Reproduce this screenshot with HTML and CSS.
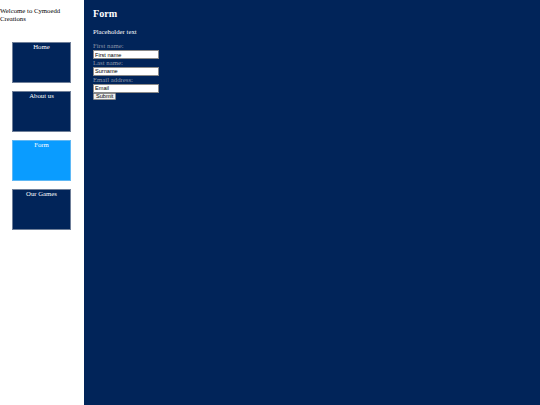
FILE: index.html
```html
<!DOCTYPE html>
<html lang="en">
<head>
<meta charset="utf-8">
<title>Form - Cymoedd Creations</title>
<link rel="stylesheet" href="styles.css">
</head>
<body>
<aside class="sidebar">
  <p class="welcome">Welcome to Cymoedd Creations</p>
  <nav class="nav">
    <a class="nav-item" href="#">Home</a>
    <a class="nav-item" href="#">About us</a>
    <a class="nav-item nav-item-active" href="#">Form</a>
    <a class="nav-item" href="#">Our Games</a>
  </nav>
</aside>
<main class="main">
  <h2 class="title">Form</h2>
  <p class="intro">Placeholder text</p>
  <form class="form">
    <label class="label" for="fname">First name:</label>
    <input class="field" type="text" id="fname" value="First name">
    <label class="label" for="lname">Last name:</label>
    <input class="field" type="text" id="lname" value="Surname">
    <label class="label" for="email">Email address:</label>
    <input class="field" type="text" id="email" value="Email">
    <button class="submit" type="button">Submit</button>
  </form>
</main>
</body>
</html>
```
FILE: styles.css
```css
html, body {
  margin: 0;
  height: 100%;
}

body {
  display: flex;
  font-family: "Liberation Serif", "Times New Roman", serif;
  font-size: 6.75px;
  line-height: 7.8px;
  background: #ffffff;
  color: #000000;
}

.sidebar {
  width: 84.4px;
  flex: none;
  background: #ffffff;
}

.welcome {
  margin: 6.75px 0;
}

.nav {
  display: flex;
  flex-direction: column;
  align-items: flex-start;
  gap: 8px;
  padding: 13.2px 0 0 12px;
}

.nav-item {
  display: block;
  box-sizing: border-box;
  width: 59px;
  height: 41px;
  background: #012459;
  border: 1px solid #6f7f99;
  color: #ffffff;
  text-decoration: none;
  text-align: center;
}

.nav-item-active {
  background: #0a9cff;
  border-color: #5fb8f5;
}

.main {
  flex: 1;
  background: #012459;
  padding: 0 8.6px;
  color: #ffffff;
}

.title {
  font-size: 10.125px;
  line-height: 11.6px;
  font-weight: bold;
  margin: 8.4px 0;
}

.intro {
  margin: 7.4px 0 6.1px;
}

.form {
  display: flex;
  flex-direction: column;
  align-items: flex-start;
}

.label {
  display: block;
  color: #8c96a8;
}

.field {
  display: block;
  box-sizing: border-box;
  width: 66.5px;
  height: 9px;
  margin: 0;
  padding: 0 1px;
  border: 0.6px solid #8a8a8a;
  background: #ffffff;
  color: #000000;
  font-family: "Liberation Sans", Arial, sans-serif;
  font-size: 5.6px;
}

.submit {
  display: block;
  box-sizing: border-box;
  height: 7.8px;
  margin: 0;
  padding: 0 2px;
  border: 0.6px solid #8a8a8a;
  border-radius: 1px;
  background: #efefef;
  color: #000000;
  font-family: "Liberation Sans", Arial, sans-serif;
  font-size: 5.6px;
  line-height: 1;
}
```
